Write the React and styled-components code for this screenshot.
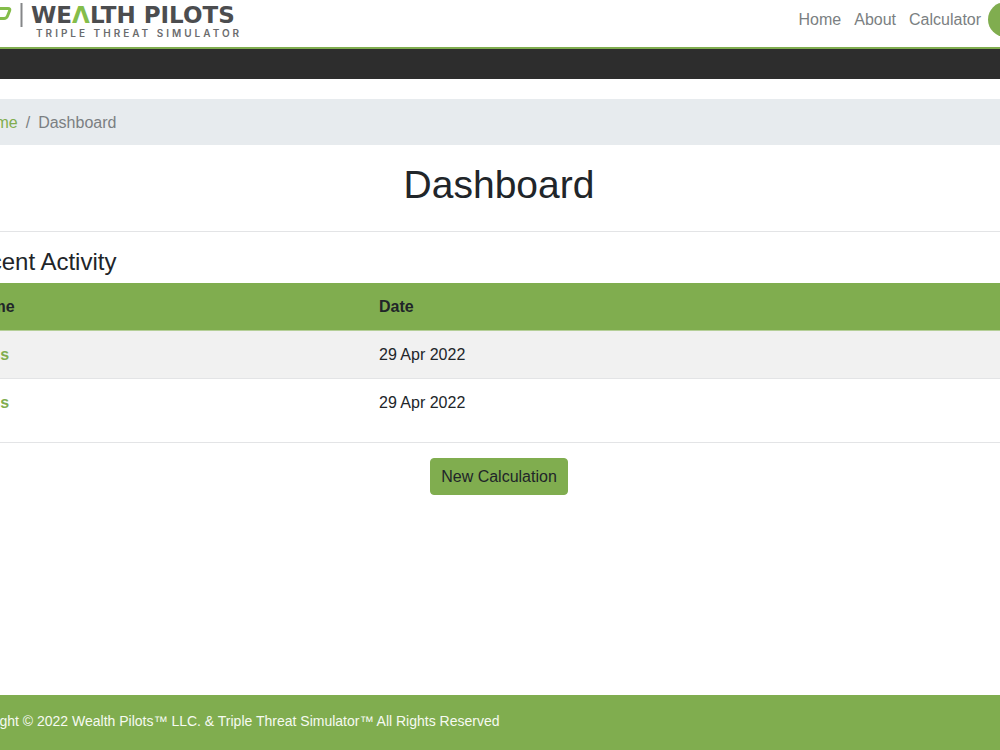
import React from 'react';
import styled, {createGlobalStyle} from 'styled-components';

const green = '#80ad4f';
const textColor = '#212529';
const mutedColor = '#7b7f82';
const borderColor = '#e3e4e6';

const GlobalStyle = createGlobalStyle`
  *, *::before, *::after {
    box-sizing: border-box;
  }
  body {
    margin: 0;
    overflow-x: hidden;
    background: #fff;
    color: ${textColor};
    font: 16px/24px "Liberation Sans", Arial, sans-serif;
  }
`;

const Page = styled.div`
  display: flex;
  flex-direction: column;
  min-height: 100vh;
  margin: 0 -69px 0 -71px;
`;

const Header = styled.header`
  display: flex;
  justify-content: space-between;
  align-items: flex-start;
  height: 49px;
  border-bottom: 2px solid ${green};
`;

const Brand = styled.a`
  display: flex;
  padding-left: 30px;
  color: #4c4d4f;
  text-decoration: none;
`;

const BrandText = styled.span`
  display: flex;
  flex-direction: column;
  padding-top: 3px;
`;

const BrandName = styled.span`
  font: bold 23px/24px "DejaVu Sans", sans-serif;
  em {
    color: #84bd4a;
    font-style: normal;
  }
`;

const Tagline = styled.span`
  padding-left: 5px;
  color: #6b6c6e;
  font: 600 10px/12px Inter, sans-serif;
  letter-spacing: 3px;
`;

const Nav = styled.nav`
  display: flex;
  align-items: center;
  gap: 13px;
  padding-top: 2px;
`;

const NavLink = styled.a`
  color: ${mutedColor};
  text-decoration: none;
`;

const LogoutButton = styled.button`
  height: 35px;
  margin-left: -6px;
  padding: 0 16px;
  border: 0;
  border-radius: 18px;
  background: ${green};
  color: #fff;
  font: inherit;
`;

const DarkBar = styled.div`
  height: 30px;
  background: #2d2d2d;
`;

const Main = styled.main`
  flex: 1;
  padding: 20px 30px;
`;

const Breadcrumb = styled.nav`
  display: flex;
  gap: 8px;
  padding: 12px 16px 10px;
  background: #e7ebee;
  color: ${mutedColor};
`;

const Link = styled.a`
  color: ${green};
  text-decoration: none;
`;

const Title = styled.h1`
  margin: 16px 0 22px;
  font-size: 39px;
  font-weight: 500;
  line-height: 48px;
  text-align: center;
`;

const Divider = styled.hr`
  margin: 0;
  border: 0;
  border-top: 1px solid ${borderColor};
`;

const Subtitle = styled.h4`
  margin: 16px 0 7px;
  font-size: 24px;
  font-weight: 500;
  line-height: 28px;
`;

const Table = styled.table`
  width: 100%;
  margin-bottom: 16px;
  border-collapse: collapse;
  table-layout: fixed;
  th, td {
    padding: 12px 12px 11px;
    border-top: 1px solid ${borderColor};
    text-align: left;
  }
  thead th {
    border-top: 0;
    border-bottom: 1px solid #b5cf98;
    background: ${green};
  }
  tbody tr:nth-of-type(odd) {
    background: #f1f1f1;
  }
`;

const HeadCell = styled.th`
  width: ${props => props.$width};
`;

const Actions = styled.div`
  display: flex;
  justify-content: center;
  padding-top: 15px;
`;

const Button = styled.button`
  padding: 6px 10px;
  border: 1px solid ${green};
  border-radius: 4px;
  background: ${green};
  color: ${textColor};
  font: inherit;
  line-height: 23px;
`;

const Footer = styled.footer`
  padding: 15px 30px 17px;
  background: ${green};
  color: #f6faf1;
  font-size: 14px;
  line-height: 23px;
`;

const links = ['Home', 'About', 'Calculator'];

const activity = [
  {id: 1, name: 'Bess', date: '29 Apr 2022'},
  {id: 2, name: 'Bess', date: '29 Apr 2022'},
];

const Emblem = () => (
  <svg width='72' height='34' viewBox='0 0 72 34' fill='none' aria-hidden='true'>
    <path d='M2 8.5L7 18.5H14L19 11L23 18.5H30L35 8.5' stroke='#4c4d4f' strokeWidth='3' />
    <path d='M35 24L39 16M38 8.5H49Q51.5 8.5 50.5 11L48.5 16Q47.5 18.5 45 18.5H37' stroke='#84bd4a' strokeWidth='3' />
    <path d='M62.5 3V27' stroke='#858688' strokeWidth='2' />
  </svg>
);

const App = () => (
  <>
    <GlobalStyle />
    <Page>
      <Header>
        <Brand href='#' aria-label='Wealth Pilots Triple Threat Simulator'>
          <Emblem />
          <BrandText>
            <BrandName>WE<em>Λ</em>LTH PILOTS</BrandName>
            <Tagline>TRIPLE THREAT SIMULATOR</Tagline>
          </BrandText>
        </Brand>
        <Nav>
          {links.map(link => <NavLink key={link} href='#'>{link}</NavLink>)}
          <LogoutButton type='button'>Logout</LogoutButton>
        </Nav>
      </Header>
      <DarkBar />
      <Main>
        <Breadcrumb aria-label='Breadcrumb'>
          <Link href='#'>Home</Link>
          <span>/</span>
          <span>Dashboard</span>
        </Breadcrumb>
        <Title>Dashboard</Title>
        <Divider />
        <Subtitle>Recent Activity</Subtitle>
        <Table>
          <thead>
            <tr>
              <HeadCell $width='408px'>Name</HeadCell>
              <HeadCell>Date</HeadCell>
            </tr>
          </thead>
          <tbody>
            {activity.map(item => (
              <tr key={item.id}>
                <th scope='row'><Link href='#'>{item.name}</Link></th>
                <td>{item.date}</td>
              </tr>
            ))}
          </tbody>
        </Table>
        <Divider />
        <Actions>
          <Button type='button'>New Calculation</Button>
        </Actions>
      </Main>
      <Footer>
        Copyright © 2022 Wealth Pilots™ LLC. &amp; Triple Threat Simulator™ All Rights Reserved
      </Footer>
    </Page>
  </>
);

export default App;
